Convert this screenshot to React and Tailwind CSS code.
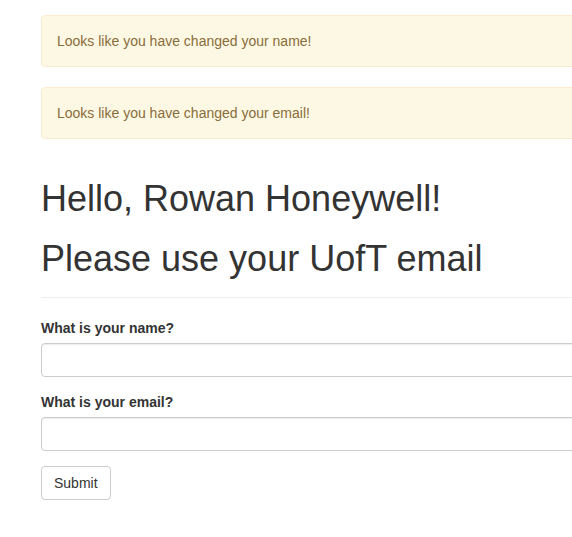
import React from "react";

const alerts = [
  "Looks like you have changed your name!",
  "Looks like you have changed your email!",
];

export default function App() {
  return (
    <div className="w-[572px] h-[537px] overflow-hidden bg-white text-[#333] text-[14px] leading-[20px] font-['Liberation_Sans',Arial,sans-serif]">
      <div className="w-[900px] pl-[41px] pt-[15px]">
        {/* flash messages */}
        <div className="flex flex-col gap-[20px]">
          {alerts.map((msg) => (
            <div
              key={msg}
              className="p-[15px] border border-[#faebcc] bg-[#fcf8e3] text-[#8a6d3b] rounded-[4px]"
            >
              {msg}
            </div>
          ))}
        </div>

        <h1 className="mt-[40px] text-[36px] leading-[40px] font-normal">Hello, Rowan Honeywell!</h1>
        <h1 className="mt-[20px] text-[36px] leading-[40px] font-normal">Please use your UofT email</h1>
        <hr className="mt-[18px] border-0 border-t border-[#eee]" />

        <form className="mt-[20px]" onSubmit={(e) => e.preventDefault()}>
          <div className="mb-[15px]">
            <label className="block mb-[5px] font-bold">What is your name?</label>
            <input
              type="text"
              className="block w-full h-[34px] px-[12px] py-[6px] border border-[#ccc] rounded-[4px] shadow-[inset_0_1px_1px_rgba(0,0,0,0.075)] outline-none"
            />
          </div>
          <div className="mb-[15px]">
            <label className="block mb-[5px] font-bold">What is your email?</label>
            <input
              type="text"
              className="block w-full h-[34px] px-[12px] py-[6px] border border-[#ccc] rounded-[4px] shadow-[inset_0_1px_1px_rgba(0,0,0,0.075)] outline-none"
            />
          </div>
          <button
            type="submit"
            className="h-[34px] px-[12px] py-[6px] border border-[#ccc] rounded-[4px] bg-white text-[#333]"
          >
            Submit
          </button>
        </form>
      </div>
    </div>
  );
}
